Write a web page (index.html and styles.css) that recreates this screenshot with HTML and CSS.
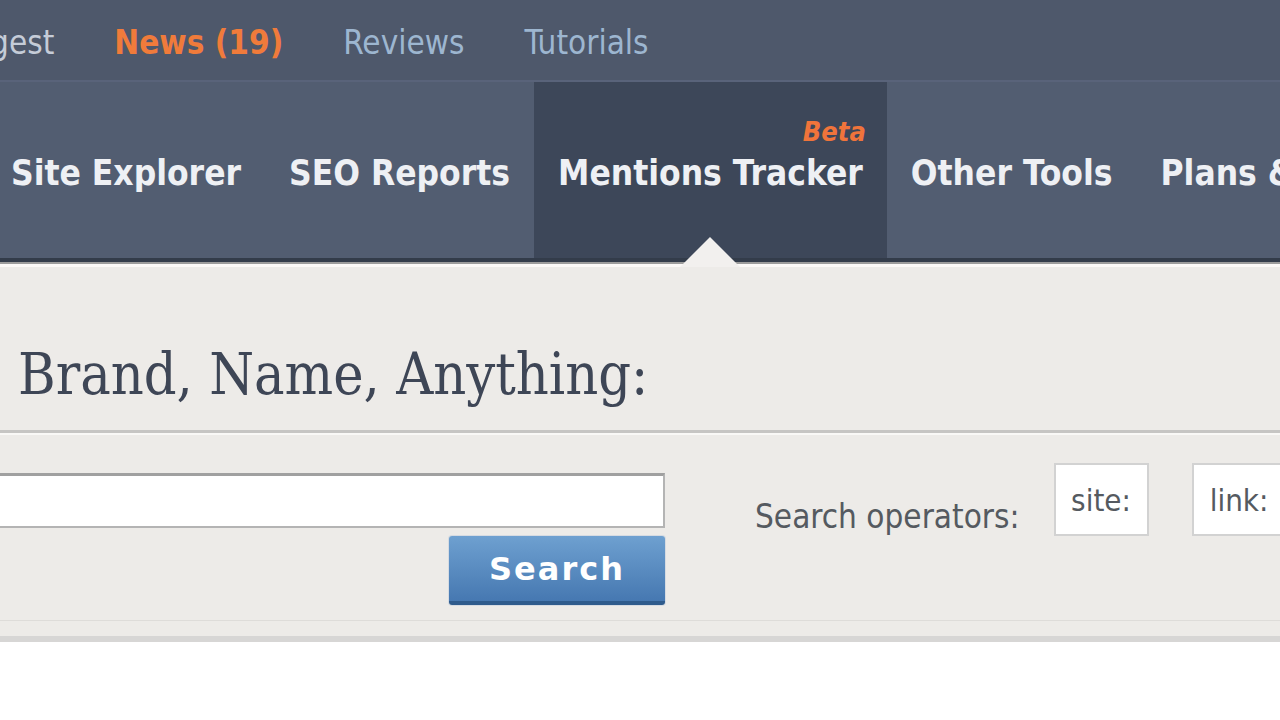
FILE: index.html
```html
<!DOCTYPE html>
<html lang="en">
<head>
<meta charset="utf-8">
<title>Mentions Tracker</title>
<link rel="stylesheet" href="styles.css">
</head>
<body>
<header class="topbar">
  <a class="top-link first">Digest</a>
  <a class="top-link news">News (19)</a>
  <a class="top-link blue">Reviews</a>
  <a class="top-link blue">Tutorials</a>
</header>
<nav class="mainnav">
  <a class="nav-item first">Site Explorer</a>
  <a class="nav-item">SEO Reports</a>
  <a class="nav-item active">Mentions Tracker<span class="beta">Beta</span><span class="pointer"></span></a>
  <a class="nav-item">Other Tools</a>
  <a class="nav-item">Plans &amp; Pricing</a>
</nav>
<main class="content">
  <h1 class="headline">Brand, Name, Anything:</h1>
  <div class="divider"></div>
  <section class="search-row">
    <div class="search-col">
      <input class="search-input" type="text">
      <button class="search-btn">Search</button>
    </div>
    <div class="operators">
      <span class="op-label">Search operators:</span>
      <span class="op-box">site:</span>
      <span class="op-box">link:</span>
    </div>
  </section>
  <div class="content-foot"></div>
</main>
<div class="page-rest"></div>
</body>
</html>
```

FILE: styles.css
```css
html, body {
  margin: 0;
  padding: 0;
}
body {
  width: 1280px;
  height: 720px;
  overflow: hidden;
  background: #ffffff;
  font-family: "DejaVu Sans Condensed", "DejaVu Sans", sans-serif;
}

.topbar {
  height: 82px;
  background: #4e586b;
  border-bottom: 2px solid #59637a;
  display: flex;
  align-items: center;
  gap: 60px;
  padding-top: 4px;
  box-sizing: border-box;
  white-space: nowrap;
  overflow: hidden;
}
.top-link {
  font-size: 33px;
  color: #c5ccd8;
}
.top-link.first {
  margin-left: -41px;
}
.top-link.news {
  color: #f07b3b;
  font-weight: bold;
}
.top-link.blue {
  color: #9db6d0;
}

.mainnav {
  height: 180px;
  background: #525d71;
  border-bottom: 4px solid #333c4a;
  display: flex;
  white-space: nowrap;
  box-sizing: border-box;
  overflow-x: clip;
  overflow-y: visible;
}
.nav-item {
  position: relative;
  display: flex;
  align-items: center;
  padding: 6px 24px 0;
  font-size: 35px;
  font-weight: bold;
  color: #eef0f4;
  flex-shrink: 0;
}
.nav-item.first {
  padding-left: 11px;
}
.nav-item.active {
  background: #3d4759;
}
.beta {
  position: absolute;
  right: 21px;
  top: 34px;
  font-size: 27px;
  font-style: italic;
  font-weight: bold;
  color: #f0743b;
}
.pointer {
  position: absolute;
  left: 146px;
  bottom: -9px;
  width: 0;
  height: 0;
  border-left: 30px solid transparent;
  border-right: 30px solid transparent;
  border-bottom: 30px solid #f2f0ee;
  z-index: 2;
}

.content {
  background: #edebe8;
  border-top: 2px solid #9c9c9c;
  box-shadow: inset 0 3px 0 #fbf9f7;
}
.headline {
  margin: 0;
  padding: 82px 0 27px 18px;
  font-family: "DejaVu Serif Condensed", "DejaVu Serif", serif;
  font-weight: normal;
  font-size: 57px;
  line-height: 1;
  color: #3e4656;
  white-space: nowrap;
}
.divider {
  height: 3px;
  background: #c6c5c3;
  border-bottom: 2px solid #f9f8f6;
}

.search-row {
  display: flex;
  align-items: flex-start;
  gap: 90px;
  padding-top: 38px;
  border-bottom: 1px solid #dedcd9;
  padding-bottom: 15px;
  overflow-x: clip;
  overflow-y: visible;
}
.search-col {
  width: 665px;
  flex-shrink: 0;
  display: flex;
  flex-direction: column;
  align-items: flex-end;
  gap: 8px;
}
.search-input {
  width: 665px;
  height: 55px;
  box-sizing: border-box;
  margin: 0;
  border: 2px solid #b4b4b4;
  border-top: 3px solid #a0a0a0;
  border-left: 0;
  background: #ffffff;
}
.search-btn {
  width: 216px;
  height: 69px;
  margin: 0;
  border: 0;
  border-bottom: 4px solid #2f5b8c;
  border-radius: 3px;
  background: linear-gradient(#6ea0d0, #4678b1);
  color: #ffffff;
  font-family: "DejaVu Sans", sans-serif;
  font-weight: bold;
  font-size: 32px;
  letter-spacing: 2px;
  box-shadow: 0 0 0 1px #d6dbe2;
}
.operators {
  display: flex;
  align-items: flex-start;
  margin-top: -10px;
  white-space: nowrap;
}
.op-label {
  font-size: 33px;
  color: #555a60;
  margin-right: 34px;
  padding-top: 34px;
}
.op-box {
  width: 95px;
  height: 73px;
  box-sizing: border-box;
  border: 2px solid #d2d2d2;
  background: #ffffff;
  display: flex;
  align-items: center;
  justify-content: center;
  font-size: 31px;
  color: #555a60;
  margin-right: 43px;
  flex-shrink: 0;
}

.content-foot {
  height: 15px;
  border-bottom: 6px solid #d7d6d5;
}
.page-rest {
  height: 100px;
  background: #ffffff;
}
```
